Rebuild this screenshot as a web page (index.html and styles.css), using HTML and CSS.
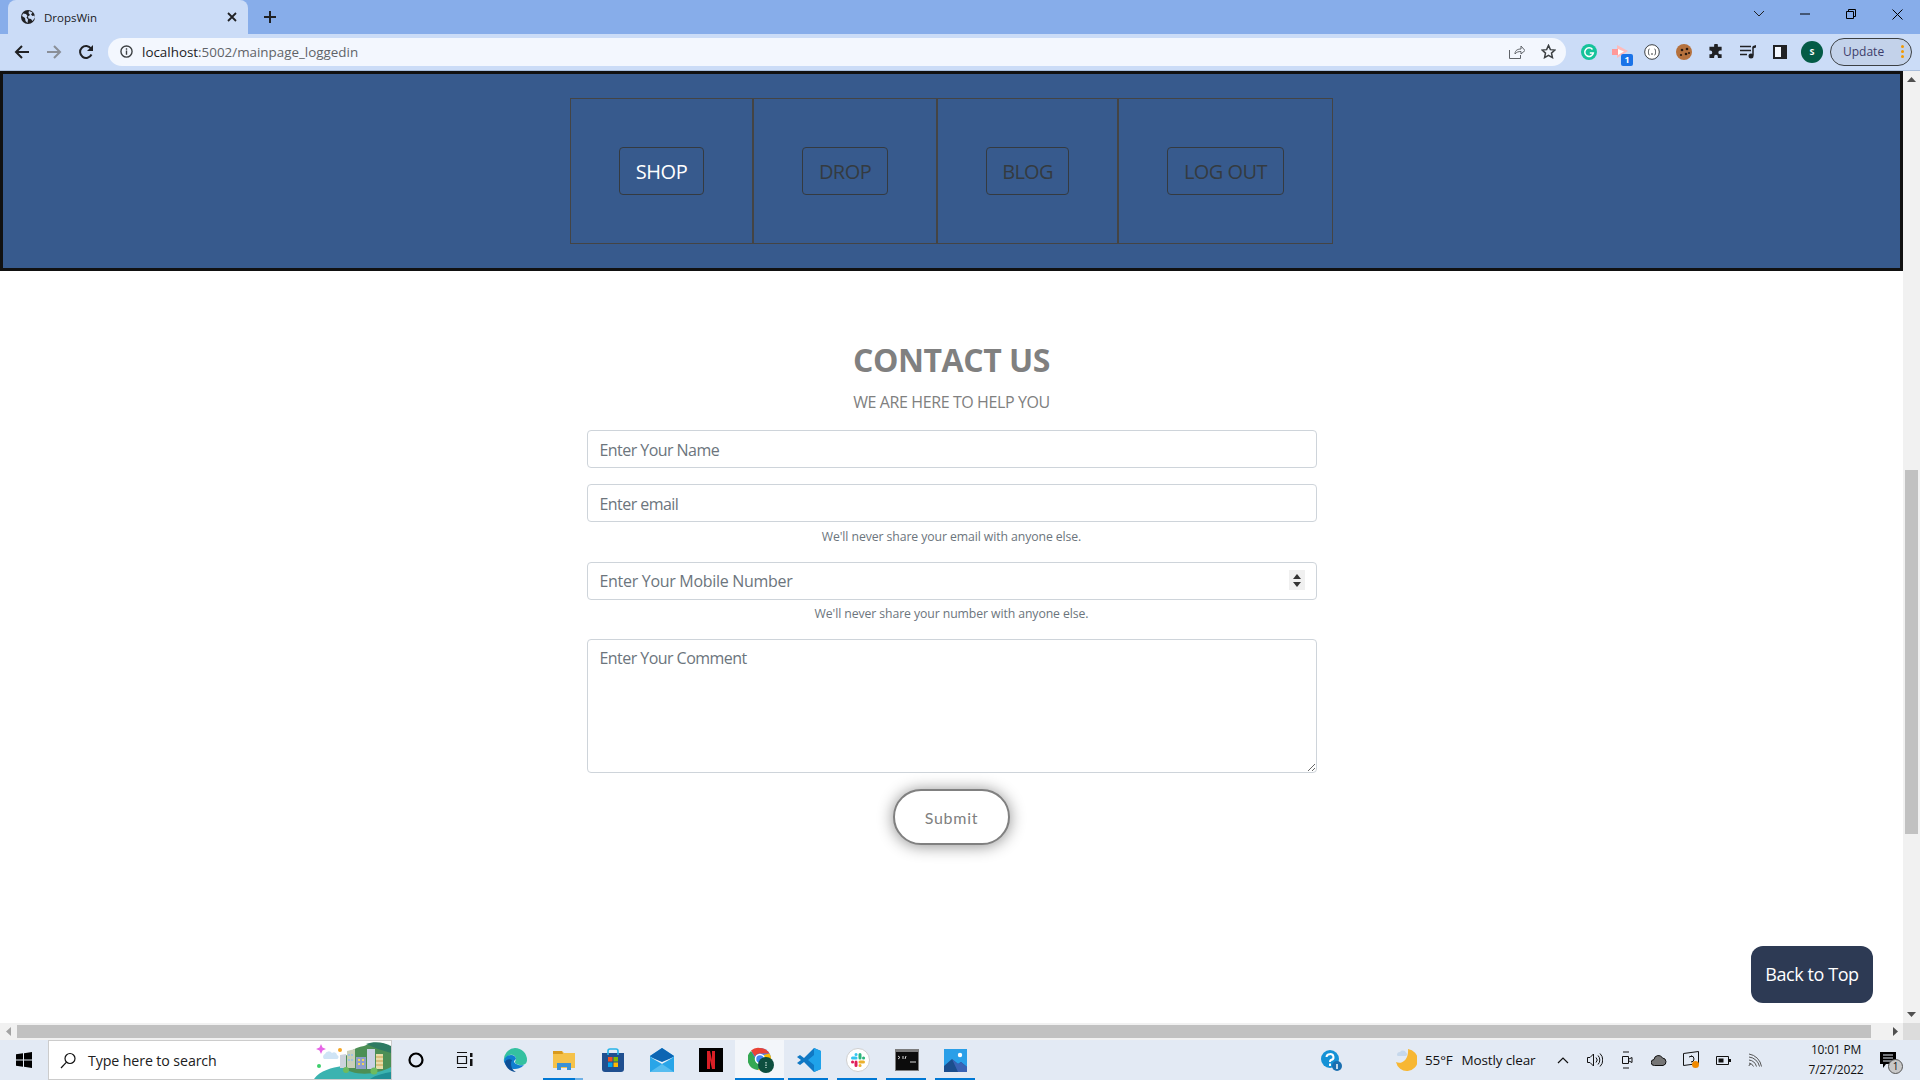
FILE: index.html
```html
<!DOCTYPE html>
<html lang="en">
<head>
<meta charset="utf-8">
<title>DropsWin</title>
<link rel="stylesheet" href="styles.css">
</head>
<body>
<div class="tabstrip">
  <div class="tab">
    <svg class="tab-fav" width="16" height="16" viewBox="0 0 16 16"><circle cx="8" cy="8" r="7" fill="#202124"/><path d="M3 4.500l3 .5 1.500 2-1 1.500 1.500 2-.5 3.500-2-2-.5-3L2 7zM9 2l3.500 1.500L11 5.500 12.500 7l2-.5.5 2-2.500 3.500-1.500-2-2.500-.5L8 7.500 10 6 8.500 4z" fill="#cbdcf7"/></svg>
    <span class="tab-title">DropsWin</span>
    <svg class="tab-close" width="10" height="10" viewBox="0 0 10 10"><path d="M1 1l8 8M9 1l-8 8" stroke="#202124" stroke-width="1.800"/></svg>
  </div>
  <svg class="newtab" width="14" height="14" viewBox="0 0 14 14"><path d="M7 1v12M1 7h12" stroke="#202124" stroke-width="2"/></svg>
  <div class="winctl">
    <span class="winbtn"><svg width="12" height="8" viewBox="0 0 12 8"><path d="M1 1l5 5 5-5" fill="none" stroke="#202124"/></svg></span>
    <span class="winbtn"><svg width="10" height="2" viewBox="0 0 10 2"><path d="M0 1h10" stroke="#000"/></svg></span>
    <span class="winbtn"><svg width="10" height="10" viewBox="0 0 10 10"><path d="M.5 2.500h7v7h-7zM2.500 2.500v-2h7v7h-2" fill="none" stroke="#000"/></svg></span>
    <span class="winbtn"><svg width="11" height="11" viewBox="0 0 11 11"><path d="M.5.500l10 10M10.500.500l-10 10" stroke="#000"/></svg></span>
  </div>
</div>
<div class="toolbar">
  <div class="nav-icons">
    <svg width="16" height="16" viewBox="0 0 16 16"><path d="M15 8H2M8 2L2 8l6 6" fill="none" stroke="#202124" stroke-width="2"/></svg>
    <svg width="16" height="16" viewBox="0 0 16 16"><path d="M1 8h13M8 2l6 6-6 6" fill="none" stroke="#8a8f98" stroke-width="2"/></svg>
    <svg width="16" height="16" viewBox="0 0 16 16"><path d="M13.500 10.500A6 6 0 1 1 13 4.500" fill="none" stroke="#202124" stroke-width="2"/><path d="M15 1v6H9z" fill="#202124"/></svg>
  </div>
  <div class="omnibox">
    <svg width="13" height="13" viewBox="0 0 14 14"><circle cx="7" cy="7" r="6" fill="none" stroke="#3c4043" stroke-width="1.500"/><path d="M7 6v4.500M7 3.500v1.500" stroke="#3c4043" stroke-width="1.500"/></svg>
    <span class="url"><span class="url-host">localhost</span>:5002/mainpage_loggedin</span>
    <svg class="omni-share" width="16" height="14" viewBox="0 0 16 14"><path d="M.5 5v8.500h11V10M6 9c0-4 3-5 6-5V1l4 4.500L12 9V6.500C9.500 6.500 7.500 7 6 9z" fill="none" stroke="#5f6368"/></svg>
    <svg class="omni-star" width="15" height="15" viewBox="0 0 16 16"><path d="M8 1.500l2 4.500 4.800.5-3.600 3.200 1 4.800L8 12.100 3.800 14.500l1-4.800L1.200 6.500 6 6z" fill="none" stroke="#3c4043" stroke-width="1.600"/></svg>
  </div>
  <div class="ext-icons">
    <svg width="16" height="16" viewBox="0 0 16 16"><circle cx="8" cy="8" r="8" fill="#15c39a"/><path d="M11.500 5.500A4.300 4.300 0 1 0 12.300 9H8.800" fill="none" stroke="#fff" stroke-width="1.500"/></svg>
    <span class="ext-badge-wrap">
      <svg width="18" height="16" viewBox="0 0 18 16"><path d="M5 1l11 6-11 7z" fill="#fbb"/><path d="M0 5h6v6H0z" fill="#f99"/><path d="M6 5l6 2.500L6 11z" fill="#fff"/></svg>
      <span class="ext-badge">1</span>
    </span>
    <svg width="16" height="16" viewBox="0 0 16 16"><circle cx="8" cy="8" r="7.300" fill="#fff" stroke="#3c4043"/><path d="M5.500 5C4 5 5 8 4 8c1 0 0 3 1.500 3M10.500 5C12 5 11 8 12 8c-1 0 0 3-1.500 3M7 10h2" fill="none" stroke="#3c4043"/></svg>
    <svg width="16" height="16" viewBox="0 0 16 16"><circle cx="8" cy="8" r="8" fill="#b5713d"/><g fill="#2a1a10"><circle cx="6" cy="6" r="1.300"/><circle cx="11" cy="5" r="1.300"/><circle cx="10" cy="10" r="1.300"/><circle cx="5" cy="11" r="1.100"/><circle cx="13" cy="9" r="1"/></g></svg>
    <svg width="15" height="15" viewBox="0 0 16 16"><path d="M6 1.500a2 2 0 0 1 4 0V3h4v4h-1.500a2 2 0 0 0 0 4H14v4h-4v-1.500a2 2 0 0 0-4 0V15H1v-4h1a2 2 0 0 0 0-4H1V3h5z" fill="#202124"/></svg>
    <svg width="16" height="14" viewBox="0 0 16 14"><path d="M0 1.500h11M0 5.500h11M0 9.500h7M13 1.500v9" fill="none" stroke="#202124" stroke-width="1.500"/><path d="M13 1l3-1v2.500l-3 1z" fill="#202124"/><circle cx="11" cy="11" r="2.500" fill="#202124"/></svg>
    <svg width="14" height="14" viewBox="0 0 14 14"><path d="M0 0h14v14H0z" fill="#202124"/><path d="M2 2h6v10H2z" fill="#f3f7fe"/></svg>
    <span class="avatar">S</span>
    <span class="update">Update<span class="update-dots"><i></i><i></i><i></i></span></span>
  </div>
</div>
<div class="viewport">
  <div class="viewport-row">
    <main class="page">
      <nav class="mainnav">
        <div class="navtable">
          <div class="navcell nc-shop"><a class="navbtn navbtn-active">SHOP</a></div>
          <div class="navcell nc-drop"><a class="navbtn">DROP</a></div>
          <div class="navcell nc-blog"><a class="navbtn">BLOG</a></div>
          <div class="navcell nc-logout"><a class="navbtn">LOG OUT</a></div>
        </div>
      </nav>
      <section class="contact">
        <h1 class="contact-title">CONTACT US</h1>
        <p class="contact-sub">WE ARE HERE TO HELP YOU</p>
        <form class="contact-form">
          <input class="field field-text" type="text" placeholder="Enter Your Name">
          <input class="field field-text" type="email" placeholder="Enter email">
          <small class="hint">We'll never share your email with anyone else.</small>
          <div class="field-wrap">
            <input class="field field-num" type="number" placeholder="Enter Your Mobile Number">
            <span class="spin">
              <svg width="8" height="5" viewBox="0 0 8 5"><path d="M4 0l4 5H0z" fill="#333"/></svg>
              <svg width="8" height="5" viewBox="0 0 8 5"><path d="M4 5l4-5H0z" fill="#333"/></svg>
            </span>
          </div>
          <small class="hint">We'll never share your number with anyone else.</small>
          <textarea class="field field-area" placeholder="Enter Your Comment"></textarea>
          <button class="submit" type="button">Submit</button>
        </form>
      </section>
      <a class="backtop">Back to Top</a>
    </main>
    <div class="vscroll">
      <svg class="arrow" width="9" height="5" viewBox="0 0 9 5"><path d="M4.500 0L9 5H0z" fill="#505050"/></svg>
      <div class="vthumb"></div>
      <svg class="arrow" width="9" height="5" viewBox="0 0 9 5"><path d="M4.500 5L9 0H0z" fill="#505050"/></svg>
    </div>
  </div>
  <div class="hscroll">
    <svg class="arrow-h" width="5" height="9" viewBox="0 0 5 9"><path d="M0 4.500L5 0v9z" fill="#a3a3a3"/></svg>
    <div class="hthumb"></div>
    <svg class="arrow-h" width="5" height="9" viewBox="0 0 5 9"><path d="M5 4.500L0 0v9z" fill="#505050"/></svg>
    <div class="corner"></div>
  </div>
</div>
<footer class="taskbar">
  <svg class="win" width="16" height="16" viewBox="0 0 16 16"><path d="M0 2.300l7-1v6.300H0zM8 1.200L16 0v7.600H8zM0 8.500h7v6.300l-7-1zM8 8.500h8V16l-8-1.200z" fill="#000"/></svg>
  <div class="search">
    <svg width="16" height="17" viewBox="0 0 16 17"><circle cx="10" cy="6.500" r="5" fill="none" stroke="#111" stroke-width="1.200"/><path d="M6.500 10.200L1 16" stroke="#111" stroke-width="1.200"/></svg>
    <span class="search-text">Type here to search</span>
    <svg class="search-art" width="77" height="38" viewBox="0 0 77 38">
      <path d="M0 38C6 29 18 27 28 25L50 30 77 20V38z" fill="#3bb3b0"/>
      <path d="M56 38c6-4 14-6 21-7v7z" fill="#1f8f96"/>
      <path d="M26 25C30 14 40 6 50 5 58 1 70 1 77 6V26C62 34 40 36 26 25z" fill="#4c8f55"/>
      <path d="M52 3C60 0 70 1 77 5v7L64 8z" fill="#2f7b63"/>
      <path d="M26 14l6-1v14h-6z" fill="#cdd3dc"/>
      <path d="M33 10l8-2v19h-8z" fill="#c9cfb8"/>
      <path d="M42 16h10v12H42z" fill="#8f9fc9"/>
      <path d="M44 18h2v2h-2zM48 18h2v2h-2zM44 22h2v2h-2zM48 22h2v2h-2z" fill="#f3d35c"/>
      <path d="M34 13h2v2h-2zM37 13h2v2h-2zM34 18h2v2h-2zM37 18h2v2h-2z" fill="#9fc2e0"/>
      <path d="M53 8h8v20h-8z" fill="#c9d1e3"/><path d="M62 13h7v15h-7z" fill="#e8dca8"/>
      <path d="M62 16h7M62 20h7M62 24h7" stroke="#c9a24c"/>
      <circle cx="32" cy="29" r="3" fill="#6dbb5e"/><circle cx="60" cy="30" r="3.500" fill="#6dbb5e"/>
      <path d="M10 18a3 3 0 0 1 1-5 4 4 0 0 1 7-1 3 3 0 0 1 5 2 2 2 0 0 1-1 4z" fill="#cfe4f5"/>
      <path d="M7 3l1.500 3.500L12 8 8.500 9.500 7 13 5.500 9.500 2 8l3.500-1.500z" fill="#e765e6"/>
      <circle cx="26" cy="9" r="2" fill="#f6a623"/>
      <circle cx="5" cy="25" r="2" fill="#3ecf6c"/>
    </svg>
  </div>
  <svg class="cortana" width="16" height="16" viewBox="0 0 16 16"><circle cx="8" cy="8" r="6.500" fill="none" stroke="#000" stroke-width="2.200"/></svg>
  <svg class="taskview" width="17" height="16" viewBox="0 0 17 16"><path d="M1 .500h10M1 15.500h10M1.500 4.500h9v7h-9z" fill="none" stroke="#111" stroke-width="1.200"/><path d="M14 1h2.500v4H14zM14 7h2.500v7H14z" fill="#111"/></svg>
  <div class="apps">
    <div class="app"><svg width="24" height="24" viewBox="0 0 24 24"><path d="M12 0a12 12 0 0 1 12 12c0 3-2 5-6 5-3 0-6-1-6-3 0-1 1-2 1-3 0-3-3-5-6-4C3 8 1 12 1 14A12 12 0 0 1 12 0z" fill="#34c1a0"/><path d="M1 14c0-4 3-7 7-7 3 0 5 2 5 4l-2 2c0 3 5 5 10 4a12 12 0 0 1-20-3z" fill="#0f7fd0"/><path d="M2 15c1 5 6 9 11 9-5-2-6-9-4-12-3-2-7 0-7 3z" fill="#0c4f96"/></svg></div>
    <div class="app app-files"><svg width="22" height="20" viewBox="0 0 22 20"><path d="M0 1h9l2 2h11v15H0z" fill="#f5c24a"/><path d="M0 1h9l1 3H0z" fill="#d99a1d"/><path d="M4 13h14v7h-4v-3H8v3H4z" fill="#3a91d6"/></svg></div>
    <div class="app"><svg width="24" height="24" viewBox="0 0 24 24"><path d="M1 5h22v16a3 3 0 0 1-3 3H4a3 3 0 0 1-3-3z" fill="#1f4f8f"/><path d="M7 7V3a2 2 0 0 1 2-2h6a2 2 0 0 1 2 2v4" fill="none" stroke="#27b4e8" stroke-width="1.600"/><path d="M7 9h4.500v4.500H7z" fill="#f25022"/><path d="M12.500 9H17v4.500h-4.500z" fill="#7fba00"/><path d="M7 14.500h4.500V19H7z" fill="#00a4ef"/><path d="M12.500 14.500H17V19h-4.500z" fill="#ffb900"/></svg></div>
    <div class="app"><svg width="24" height="24" viewBox="0 0 24 24"><path d="M0 8L12 0l12 8v16H0z" fill="#29a5e8"/><path d="M0 8L12 0l12 8-12 8z" fill="#0c65b3"/><path d="M0 9l12 5 12-5-12 7z" fill="#e8f4fb"/><path d="M0 24l12-8 12 8z" fill="#57bdf0"/></svg></div>
    <div class="app"><svg width="24" height="24" viewBox="0 0 24 24"><path d="M0 0h24v24H0z" fill="#000"/><path d="M8 3h3l2 9V3h3v18h-3l-2-9v9H8z" fill="#d81f26"/></svg></div>
    <div class="app app-active"><svg class="chrome-ic" width="26" height="26" viewBox="0 0 26 26"><circle cx="12" cy="12" r="11" fill="#4285f4"/><path d="M12 1a11 11 0 0 1 9.500 5.500H12a5.500 5.500 0 0 0-5 3L3 3.500A11 11 0 0 1 12 1z" fill="#ea4335"/><path d="M3 4l4.500 8a5 5 0 0 0 6 3.500L10 23A11 11 0 0 1 3 4z" fill="#34a853"/><path d="M21.500 6.500A11 11 0 0 1 10 23l4.500-7.500a5 5 0 0 0 1-7.500z" fill="#fbbc05"/><circle cx="12" cy="12" r="4.500" fill="#4285f4" stroke="#fff" stroke-width="1.500"/><circle cx="18" cy="18" r="8" fill="#0e4f3f"/><path d="M18 15v6" stroke="#a8c8bc" stroke-width="1.500" stroke-dasharray="1.500 1"/></svg></div>
    <div class="app"><svg width="24" height="24" viewBox="0 0 24 24"><path d="M17 0l7 3v18l-7 3-10-10-4 3-3-2 4-3-4-3 3-2 4 3z" fill="#0f78c4"/><path d="M17 0l7 3v18l-7 3zM17 7l-6 5 6 5z" fill="#1fa2ea"/></svg></div>
    <div class="app"><svg width="24" height="24" viewBox="0 0 24 24"><circle cx="12" cy="12" r="11.500" fill="#fff" stroke="#cfcfcf"/><g fill="none" stroke-width="3" stroke-linecap="round"><path d="M6.500 10H10M10 6.500h.1" stroke="#36c5f0"/><path d="M14 6.500V10M17.500 10h.1" stroke="#2eb67d"/><path d="M14 14h3.500M14 17.500h.1" stroke="#ecb22e"/><path d="M10 14v3.500M6.500 14h.1" stroke="#e01e5a"/></g></svg></div>
    <div class="app"><svg width="24" height="22" viewBox="0 0 24 22"><path d="M0 0h24v22H0z" fill="#7d7d7d"/><path d="M1 3h22v18H1z" fill="#0c0c0c"/><path d="M3 7l2 1.500L3 10M8 7v3M11 7l-1 3M15 13h6" fill="none" stroke="#d8d8d8"/></svg></div>
    <div class="app"><svg width="23" height="23" viewBox="0 0 23 23"><path d="M0 0h23v23H0z" fill="#2a9fe8"/><circle cx="16" cy="6" r="2.200" fill="#fff"/><path d="M0 23V17l8-7 6 5 3-2 6 5v5z" fill="#1b4e8e"/><path d="M8 10l6 5 3-2 6 5v5H14z" fill="#3a63b5"/></svg></div>
  </div>
  <div class="tray">
    <svg class="tray-help" width="21" height="21" viewBox="0 0 21 21"><circle cx="9" cy="9" r="9" fill="#1592d6"/><path d="M5.500 7A3.500 3 0 1 1 10 10c-1 .5-1 1-1 2M9 13.500V16" fill="none" stroke="#fff" stroke-width="2"/><circle cx="16" cy="16" r="5" fill="#1a6fb0"/><path d="M16 14v5" stroke="#fff" stroke-width="1.500"/></svg>
    <svg class="tray-moon" width="22" height="24" viewBox="0 0 22 24"><path d="M13 1a11 11 0 1 1-12 13c6 3 13-3 12-13z" fill="#f7b733"/><path d="M2 7a3 3 0 0 1 3-3 3.500 3.500 0 0 1 6 .5A2 2 0 0 1 11 8H3a1.500 1.500 0 0 1-1-1z" fill="#c6d8ec"/></svg>
    <div class="weather-group">
      <span class="weather">55°F</span>
      <span class="weather">Mostly clear</span>
    </div>
    <span class="tray-cell"><svg width="12" height="7" viewBox="0 0 12 7"><path d="M1 6l5-5 5 5" fill="none" stroke="#111" stroke-width="1.200"/></svg></span>
    <span class="tray-cell"><svg width="16" height="16" viewBox="0 0 16 16"><path d="M.5 5.500h2.500L6.500 2v12L3 10.500H.5z" fill="none" stroke="#111"/><path d="M9 5.500a3.500 3.500 0 0 1 0 5M11 3.500a6.500 6.500 0 0 1 0 9M13 1.500a9 9 0 0 1 0 13" fill="none" stroke="#111"/></svg></span>
    <span class="tray-cell"><svg width="12" height="18" viewBox="0 0 12 18"><path d="M2 1h6M2 17h6" stroke="#111"/><path d="M1.500 5.500h6v7h-6zM8 8l3-1.500v5L8 10" fill="none" stroke="#111"/></svg></span>
    <span class="tray-cell"><svg width="16" height="11" viewBox="0 0 16 11"><path d="M3.500 10.500a3 3 0 0 1-.5-6A4.500 4.500 0 0 1 11.500 3 3.800 3.800 0 0 1 12 10.500z" fill="#767676" stroke="#111"/></svg></span>
    <span class="tray-cell"><svg width="17" height="18" viewBox="0 0 17 18"><path d="M.5 2.500l15-2v12l-15 2z" fill="none" stroke="#111"/><path d="M6 6l3-1M8 5a3 3 0 0 1 0 6" fill="none" stroke="#111"/><circle cx="12.500" cy="13.500" r="3.500" fill="#f08a00"/></svg></span>
    <span class="tray-cell"><svg width="15" height="9" viewBox="0 0 15 9"><path d="M.5.500h12v8H.5z" fill="none" stroke="#111"/><path d="M2.500 2.500h5v4h-5z" fill="#111"/><path d="M13 3h2v3h-2z" fill="#111"/></svg></span>
    <span class="tray-cell"><svg width="14" height="14" viewBox="0 0 14 14"><path d="M1 13a2 2 0 0 1 2-2M1 10a6 6 0 0 1 4.500 3.500M1 7a9 9 0 0 1 7.500 6.500M1 4a12 12 0 0 1 10.500 9.500M1 1a15 15 0 0 1 12.500 12.500" fill="none" stroke="#555"/></svg></span>
    <div class="clock"><span>10:01 PM</span><span>7/27/2022</span></div>
    <div class="notify">
      <svg width="16" height="17" viewBox="0 0 16 17"><path d="M0 0h16v12H6l-3 4v-4H0z" fill="#000"/><path d="M3 3h10M3 6h10M3 9h10" stroke="#e3eaf4"/></svg>
      <span class="notify-badge">1</span>
    </div>
  </div>
</footer>
</body>
</html>
```
FILE: styles.css
```css
* { box-sizing: border-box; }
html, body { margin: 0; padding: 0; height: 100%; overflow: hidden; }
body { display: flex; flex-direction: column; width: 1920px; height: 1080px; font-family: "Open Sans", "Liberation Sans", sans-serif; background: #fff; }

.tabstrip { height: 34px; background: #87adea; display: flex; align-items: flex-end; padding-left: 8px; flex: none; }
.tab { width: 240px; height: 34px; background: #cbdcf7; border-radius: 8px 8px 0 0; display: flex; align-items: center; padding: 0 11px 0 12px; }
.tab-title { font-size: 11.500px; color: #202124; margin-left: 8px; flex: 1; }
.newtab { margin: 0 0 10px 15px; }
.winctl { margin-left: auto; display: flex; height: 34px; }
.winbtn { width: 46px; height: 28px; display: flex; align-items: center; justify-content: center; }

.toolbar { height: 37px; background: #cbdcf7; border-bottom: 1px solid #a9bedc; display: flex; align-items: center; flex: none; padding-bottom: 1px; }
.nav-icons { width: 108px; display: flex; align-items: center; gap: 16px; padding-left: 14px; }
.omnibox { width: 1458px; height: 28px; border-radius: 14px; background: #f3f7fe; display: flex; align-items: center; padding: 0 10px 0 12px; }
.url { font-size: 13.400px; color: #5f6368; margin-left: 9px; flex: 1; }
.url-host { color: #202124; }
.omni-share { margin-right: 16px; }
.ext-icons { flex: 1; display: flex; align-items: center; padding-left: 13px; gap: 12px; }
.ext-icons > svg { flex: none; width: 16px; margin: 0 2px; }
.ext-badge-wrap { position: relative; display: flex; margin-left: 1px; }
.ext-badge { position: absolute; right: -3px; bottom: -6px; width: 12px; height: 12px; background: #1a73e8; color: #fff; font-size: 9px; font-weight: 700; line-height: 12px; text-align: center; border-radius: 2px; }
.avatar { width: 22px; height: 22px; border-radius: 50%; background: #045b46; color: #fff; font-size: 9px; font-weight: 700; display: flex; align-items: center; justify-content: center; flex: none; margin-left: -1px; }
.update { width: 82px; height: 28px; border: 1px solid #3c4043; border-radius: 14px; background: #c3d2ea; font-size: 12px; color: #3d3d6b; display: flex; align-items: center; justify-content: space-between; padding: 0 7px 0 12px; flex: none; margin-left: -5px; }
.update-dots { display: flex; flex-direction: column; gap: 2px; }
.update-dots i { width: 3px; height: 3px; border-radius: 50%; background: #f29900; display: block; }

.viewport { height: 969px; display: flex; flex-direction: column; flex: none; }
.viewport-row { flex: 1; display: flex; min-height: 0; }
.page { flex: 1; position: relative; background: #fff; min-width: 0; }
.mainnav { height: 200px; background: #375a8d; border: 3px solid #111; padding-top: 24px; display: flex; justify-content: center; align-items: flex-start; }
.navtable { display: flex; height: 146px; border: 1px solid #444; }
.navcell { display: flex; align-items: center; justify-content: center; }
.navcell + .navcell { border-left: 2px solid #444; }
.nc-shop { width: 181px; }
.nc-drop { width: 184px; }
.nc-blog { width: 181px; }
.nc-logout { width: 215px; }
.navbtn { display: block; padding: 0 16px; height: 48px; line-height: 48px; border: 1px solid #343a40; border-radius: 4px; font-size: 20px; color: #343a40; white-space: nowrap; letter-spacing: -.55px; }
.navbtn-active { color: #fff; padding: 0 16px; letter-spacing: -.45px; }
.nc-blog .navbtn { padding: 0 15px; letter-spacing: -.7px; }

.contact { display: flex; flex-direction: column; align-items: center; padding-top: 70px; color: #808080; }
.contact-title { margin: 0; font-size: 32px; font-weight: 700; line-height: 38px; color: #808080; letter-spacing: -.45px; }
.contact-sub { margin: 11px 0 16px; font-size: 16px; line-height: 24px; letter-spacing: -.4px; }
.contact-form { width: 730px; display: flex; flex-direction: column; align-items: center; }
.field { width: 100%; height: 38px; border: 1px solid #ced4da; border-radius: 4px; padding: 6px 12px; font: 16px/24px "Open Sans", sans-serif; letter-spacing: -.55px; color: #495057; background: #fff; flex: none; display: block; margin-bottom: 16px; outline: none; }
.field::placeholder { color: #6c757d; opacity: 1; }
.field-text { padding: 7px 12px 5px; }
.field-wrap { width: 100%; position: relative; flex: none; }
.field-num { margin-bottom: 15px; -moz-appearance: textfield; letter-spacing: -.3px; }
.field-num::-webkit-inner-spin-button { display: none; }
.spin { position: absolute; right: 12px; top: 8px; width: 16px; height: 20px; background: #f0f0f0; display: flex; flex-direction: column; align-items: center; justify-content: center; gap: 3px; }
.field + .hint, .field-wrap + .hint { margin-top: -12px; }
.hint { font-size: 12.250px; line-height: 21px; color: #6c757d; margin-bottom: 15px; letter-spacing: -.09px; }
.field-area { height: 134px; margin-bottom: 16px; resize: vertical; }
.submit { width: 117px; height: 56px; border: 2px solid #808080; border-radius: 28px; background: #fff; color: #808080; font: 400 16px "Lato", sans-serif; box-shadow: 0 1px 16px rgba(0,0,0,.45); letter-spacing: .75px; }

.backtop { position: absolute; left: 1751px; top: 875px; width: 122px; height: 57px; border-radius: 12px; background: #2d3a54; color: #fff; font-size: 18px; display: flex; align-items: center; justify-content: center; letter-spacing: -.42px; padding-bottom: 2px; }

.vscroll { width: 17px; background: #f1f1f1; display: flex; flex-direction: column; align-items: center; flex: none; padding: 6px 0 6px; }
.vthumb { width: 13px; height: 364px; background: #c1c1c1; margin: 388px 0 0; }
.vscroll .arrow:last-child { margin-top: auto; }
.hscroll { height: 17px; background: #f1f1f1; display: flex; align-items: center; flex: none; padding-left: 6px; }
.hthumb { width: 1854px; height: 13px; background: #c1c1c1; margin-left: 6px; }
.hthumb + .arrow-h { margin-left: 22px; flex: none; }
.arrow-h { flex: none; }
.corner { width: 17px; height: 17px; background: #dcdcdc; margin-left: auto; }

.taskbar { height: 40px; background: #e3eaf4; display: flex; align-items: center; flex: none; padding-left: 16px; }
.win { flex: none; margin-right: 16px; }
.search { width: 344px; height: 40px; background: #fff; border: 1px solid #ccc; display: flex; align-items: center; padding-left: 11px; flex: none; }
.search-text { font-size: 14.200px; color: #202020; margin-left: 12px; flex: 1; letter-spacing: -.1px; }
.search-art { flex: none; }
.cortana { margin-left: 16px; flex: none; }
.taskview { margin-left: 32px; flex: none; }
.apps { display: flex; margin-left: 17px; flex: none; }
.app { width: 49px; height: 40px; display: flex; align-items: center; justify-content: center; position: relative; }
.app::after { content: ""; position: absolute; left: 4px; right: 5px; bottom: 0; height: 2px; background: #0078d4; }
.app:nth-child(1)::after, .app:nth-child(3)::after, .app:nth-child(4)::after, .app:nth-child(5)::after { display: none; }
.app-files::after { background: linear-gradient(90deg, #0078d4 80%, #6fb1e6 80%); }
.app-active { background: #f3f6fa; }
.app-active::after { left: 0; right: 0; }
.chrome-ic { margin-left: 2px; }

.tray { flex: 1; display: flex; align-items: center; min-width: 0; }
.tray-help { margin-left: 341px; flex: none; }
.tray-moon { margin-left: 53px; flex: none; }
.weather-group { width: 122px; margin-left: 8px; display: flex; flex: none; }
.weather { font-size: 13.500px; color: #111; white-space: nowrap; letter-spacing: -.15px; }
.weather + .weather { margin-left: 9px; }
.tray-cell { width: 32px; display: flex; align-items: center; justify-content: center; flex: none; }
.clock { display: flex; flex-direction: column; align-items: center; font-size: 12px; line-height: 20px; color: #111; margin-left: 33px; width: 64px; letter-spacing: -.2px; flex: none; }
.notify { position: relative; margin-left: 12px; flex: none; display: flex; }
.notify-badge { position: absolute; left: 8px; top: 7px; width: 15px; height: 15px; border-radius: 50%; background: #c8c8c8; border: 1px solid #555; color: #111; font-size: 10px; line-height: 13px; text-align: center; }
```
